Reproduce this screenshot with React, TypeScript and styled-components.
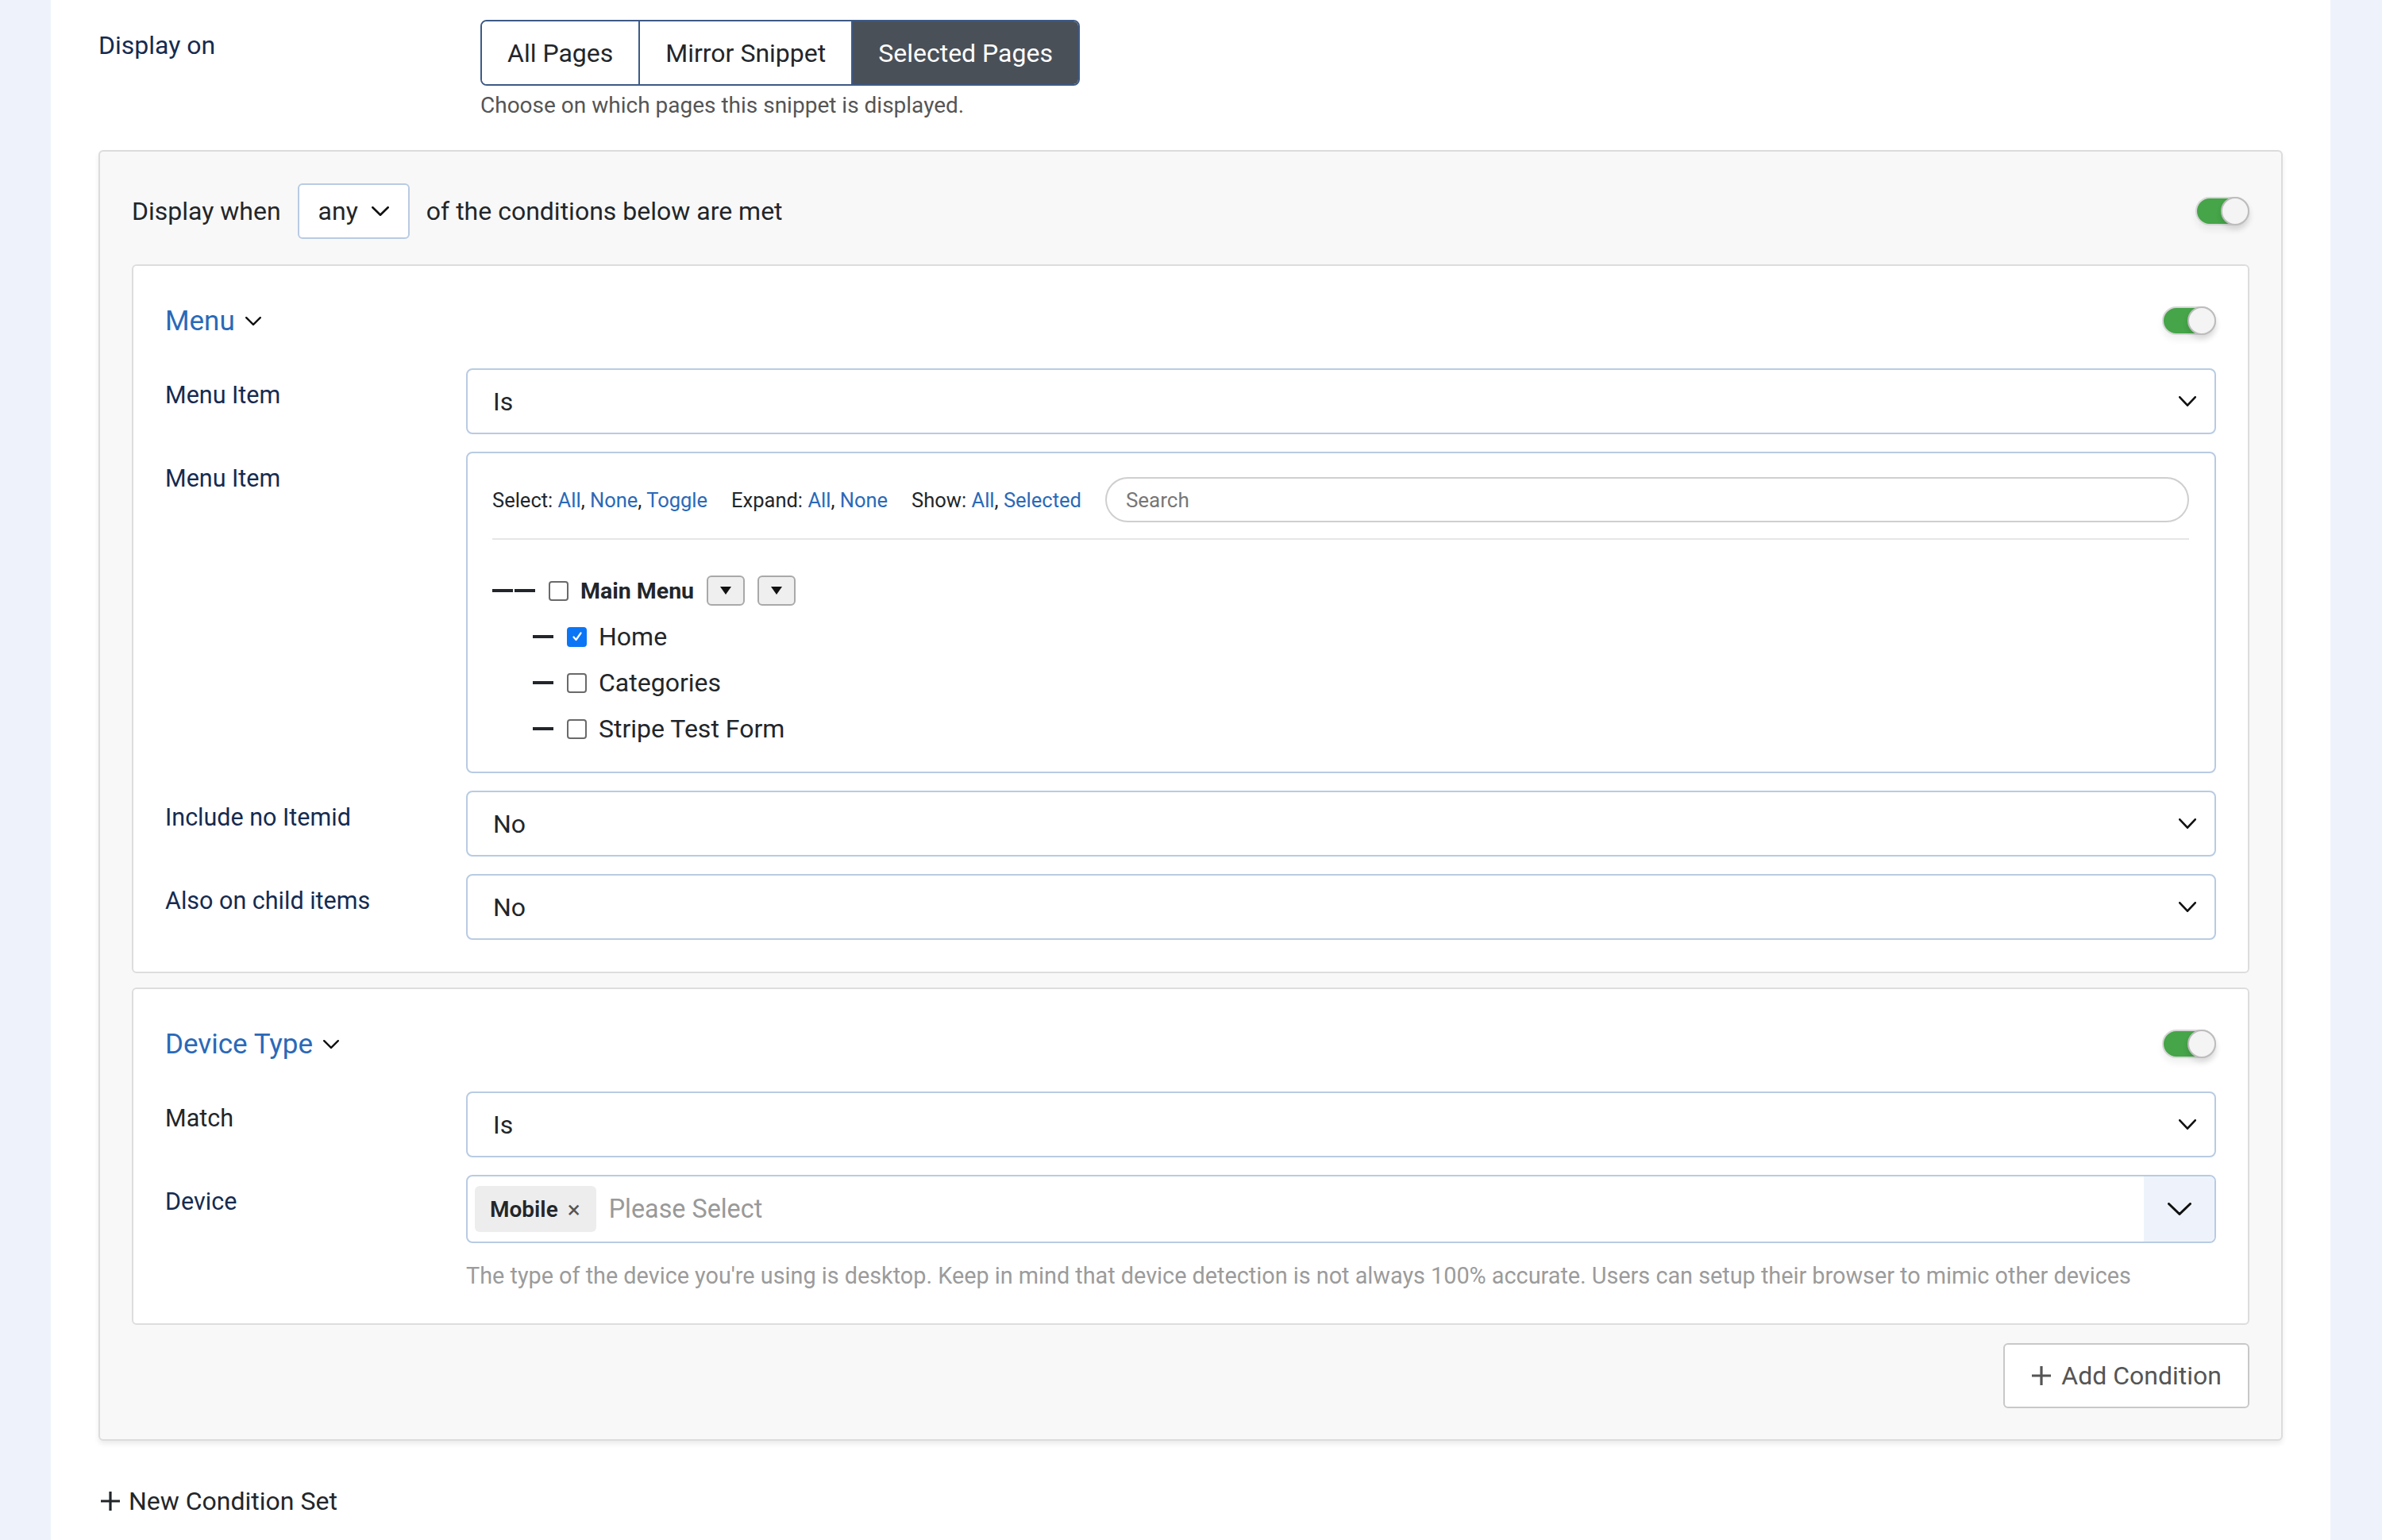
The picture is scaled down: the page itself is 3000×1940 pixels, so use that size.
import styled, { createGlobalStyle } from 'styled-components';

const GlobalStyle = createGlobalStyle`
  html, body {
    margin: 0;
    padding: 0;
  }
  body {
    background: #eef3fb;
    font-family: Roboto, "Noto Sans", Arial, sans-serif;
    color: #22262a;
  }
  * {
    box-sizing: border-box;
  }
`;

const Page = styled.div`
  margin: 0 65px 0 64px;
  min-height: 1940px;
  background: #fff;
  padding: 25px 60px 0;
`;

const TopRow = styled.div`
  display: grid;
  grid-template-columns: 481px 1fr;
`;

const TopLabel = styled.div`
  font-size: 32px;
  line-height: 46px;
  padding-top: 9px;
  color: #152b50;
`;

const Segments = styled.div`
  display: inline-flex;
  height: 83px;
  border: 2px solid #3d5a86;
  border-radius: 8px;
  overflow: hidden;
`;

const Segment = styled.button<{ $active?: boolean }>`
  font-family: inherit;
  font-size: 32px;
  padding: 0 32px;
  border: none;
  border-right: 2px solid #3d5a86;
  background: ${(p) => (p.$active ? '#4a5058' : '#fff')};
  color: ${(p) => (p.$active ? '#fff' : '#22262a')};
  &:last-child {
    border-right: none;
  }
`;

const TopHelp = styled.div`
  margin-top: 5px;
  font-size: 28px;
  line-height: 40px;
  color: #555;
`;

const SetPanel = styled.div`
  margin-top: 36px;
  background: #f8f8f8;
  border: 2px solid #dcdcdc;
  border-radius: 6px;
  box-shadow: 0 4px 6px rgba(0, 0, 0, 0.08);
  padding: 40px 40px 39px;
`;

const WhenRow = styled.div`
  display: flex;
  align-items: center;
  gap: 21px;
  font-size: 32px;
`;

const MiniSelect = styled.div`
  display: flex;
  align-items: center;
  gap: 17px;
  height: 70px;
  padding: 0 24px 0 24px;
  background: #fff;
  border: 2px solid #b9cbe3;
  border-radius: 6px;
  font-size: 32px;
`;

const Switch = styled.div`
  margin-left: auto;
  position: relative;
  width: 68px;
  height: 36px;
  border-radius: 18px;
  background: #45a548;
  border: 2px solid #d6d6d6;
  box-shadow: 0 6px 8px rgba(0, 0, 0, 0.06);
`;

const Knob = styled.span`
  position: absolute;
  right: -2px;
  top: -2px;
  width: 36px;
  height: 36px;
  border-radius: 50%;
  background: #f4f4f4;
  border: 2px solid #bdbdbd;
  box-shadow: 0 5px 7px rgba(0, 0, 0, 0.1);
`;

const Card = styled.div<{ $first?: boolean }>`
  margin-top: ${(p) => (p.$first ? '32px' : '18px')};
  background: #fff;
  border: 2px solid #dddddd;
  border-radius: 6px;
  padding: 44px 40px 40px;
`;

const CardHead = styled.div`
  display: flex;
  align-items: center;
  height: 50px;
  margin-bottom: 35px;
`;

const CardTitle = styled.div`
  display: flex;
  align-items: center;
  gap: 13px;
  font-size: 35px;
  color: #2a69b8;
`;

const Fields = styled.div`
  display: grid;
  grid-template-columns: 379px 1fr;
  row-gap: 22px;
`;

const Label = styled.div<{ $dark?: boolean }>`
  font-size: 30.5px;
  line-height: 45px;
  padding-top: 11px;
  color: ${(p) => (p.$dark ? '#22262a' : '#152b50')};
`;

const SelectBox = styled.div`
  display: flex;
  align-items: center;
  justify-content: space-between;
  height: 83px;
  padding: 0 23px 0 32px;
  border: 2px solid #b9cbe3;
  border-radius: 8px;
  font-size: 32px;
  color: #22262a;
`;

const TreeBox = styled.div`
  border: 2px solid #b9cbe3;
  border-radius: 8px;
  padding: 30px 32px 25px 31px;
`;

const Toolbar = styled.div`
  display: flex;
  align-items: center;
  gap: 30px;
  font-size: 25.5px;
  padding-bottom: 20px;
  border-bottom: 2px solid #e6e6e6;
`;

const ToolGroup = styled.span`
  white-space: nowrap;
`;

const ToolLink = styled.a`
  color: #2a69b8;
  text-decoration: none;
`;

const Search = styled.input`
  flex: 1;
  height: 57px;
  border: 2px solid #cfcfcf;
  border-radius: 29px;
  padding: 0 24px;
  font-family: inherit;
  font-size: 26px;
  outline: none;
  &::placeholder {
    color: #777;
  }
`;

const TreeList = styled.div`
  margin-top: 35px;
`;

const TreeRow = styled.div<{ $child?: boolean }>`
  display: flex;
  align-items: center;
  height: 58px;
  padding-left: ${(p) => (p.$child ? '51px' : '0')};
  font-size: ${(p) => (p.$child ? '32px' : '28.5px')};
  font-weight: ${(p) => (p.$child ? 400 : 700)};
`;

const Dash = styled.span`
  display: inline-block;
  width: 26px;
  height: 4px;
  background: #22262a;
  & + & {
    margin-left: 2px;
  }
`;

const Check = styled.span<{ $on?: boolean }>`
  display: inline-flex;
  align-items: center;
  justify-content: center;
  width: 25px;
  height: 25px;
  border-radius: 4px;
  border: 2px solid ${(p) => (p.$on ? '#0b76f5' : '#6a6a6a')};
  background: ${(p) => (p.$on ? '#0b76f5' : '#fff')};
  margin: 0 15px 0 17px;
`;

const CaretBtn = styled.span`
  display: inline-flex;
  align-items: center;
  justify-content: center;
  width: 48px;
  height: 38px;
  margin-left: 16px;
  border: 2px solid #a9a9a9;
  border-radius: 6px;
  background: #efefef;
`;

const MultiBox = styled.div`
  display: flex;
  align-items: center;
  height: 86px;
  padding-left: 9px;
  border: 2px solid #b9cbe3;
  border-radius: 8px;
  overflow: hidden;
`;

const Chip = styled.span`
  display: inline-flex;
  align-items: center;
  gap: 12px;
  height: 58px;
  padding: 0 20px 0 19px;
  border-radius: 6px;
  background: #ededed;
  font-size: 28px;
  font-weight: 600;
  color: #22262a;
`;

const ChipX = styled.span`
  font-weight: 400;
  color: #555;
  font-size: 30px;
`;

const Placeholder = styled.span`
  flex: 1;
  margin-left: 16px;
  font-size: 32.3px;
  color: #999;
`;

const DropArea = styled.span`
  display: flex;
  align-items: center;
  justify-content: center;
  align-self: stretch;
  width: 89px;
  background: #eef3fb;
`;

const Help = styled.div`
  grid-column: 2;
  margin-top: -1px;
  font-size: 28.8px;
  line-height: 40px;
  color: #9b9b9b;
`;

const Footer = styled.div`
  display: flex;
  justify-content: flex-end;
  margin-top: 23px;
`;

const AddButton = styled.button`
  display: flex;
  align-items: center;
  gap: 12px;
  height: 82px;
  padding: 0 33px;
  background: #fff;
  border: 2px solid #c8c8c8;
  border-radius: 6px;
  font-family: inherit;
  font-size: 32px;
  color: #555;
`;

const NewSet = styled.div`
  display: flex;
  align-items: center;
  gap: 10px;
  margin-top: 53px;
  padding-left: 2px;
  font-size: 32px;
  line-height: 46px;
  color: #22262a;
`;

const Chevron = ({ w, h, sw = 2.6, color = '#111' }: { w: number; h: number; sw?: number; color?: string }) => (
  <svg width={w} height={h} viewBox={`0 0 ${w} ${h}`} fill="none">
    <polyline
      points={`${sw / 2},${sw / 2} ${w / 2},${h - sw / 2} ${w - sw / 2},${sw / 2}`}
      stroke={color}
      strokeWidth={sw}
      strokeLinecap="round"
      strokeLinejoin="round"
    />
  </svg>
);

const Plus = ({ color }: { color: string }) => (
  <svg width="26" height="26" viewBox="0 0 26 26">
    <path d="M13 1v24M1 13h24" stroke={color} strokeWidth="3.2" />
  </svg>
);

const Caret = () => (
  <svg width="14" height="10" viewBox="0 0 14 10">
    <polygon points="0,0 14,0 7,10" fill="#111" />
  </svg>
);

const Tick = () => (
  <svg width="16" height="16" viewBox="0 0 16 16" fill="none">
    <polyline points="3.5,8.5 6.5,12 12.5,3.5" stroke="#fff" strokeWidth="2.2" strokeLinecap="round" strokeLinejoin="round" />
  </svg>
);

const Toggle = () => (
  <Switch>
    <Knob />
  </Switch>
);

const Select = ({ value }: { value: string }) => (
  <SelectBox>
    <span>{value}</span>
    <Chevron w={22} h={13} />
  </SelectBox>
);

const menuItems = [
  { label: 'Home', checked: true },
  { label: 'Categories', checked: false },
  { label: 'Stripe Test Form', checked: false },
];

export default function App() {
  return (
    <>
      <GlobalStyle />
      <Page>
        <TopRow>
          <TopLabel>Display on</TopLabel>
          <div>
            <Segments>
              <Segment>All Pages</Segment>
              <Segment>Mirror Snippet</Segment>
              <Segment $active>Selected Pages</Segment>
            </Segments>
            <TopHelp>Choose on which pages this snippet is displayed.</TopHelp>
          </div>
        </TopRow>

        <SetPanel>
          <WhenRow>
            <span>Display when</span>
            <MiniSelect>
              <span>any</span>
              <Chevron w={22} h={12} sw={2.6} />
            </MiniSelect>
            <span>of the conditions below are met</span>
            <Toggle />
          </WhenRow>

          <Card $first>
            <CardHead>
              <CardTitle>
                Menu
                <Chevron w={20} h={11} sw={2.4} />
              </CardTitle>
              <Toggle />
            </CardHead>
            <Fields>
              <Label>Menu Item</Label>
              <Select value="Is" />

              <Label>Menu Item</Label>
              <TreeBox>
                <Toolbar>
                  <ToolGroup>
                    Select: <ToolLink>All</ToolLink>, <ToolLink>None</ToolLink>, <ToolLink>Toggle</ToolLink>
                  </ToolGroup>
                  <ToolGroup>
                    Expand: <ToolLink>All</ToolLink>, <ToolLink>None</ToolLink>
                  </ToolGroup>
                  <ToolGroup>
                    Show: <ToolLink>All</ToolLink>, <ToolLink>Selected</ToolLink>
                  </ToolGroup>
                  <Search placeholder="Search" />
                </Toolbar>
                <TreeList>
                  <TreeRow>
                    <Dash />
                    <Dash />
                    <Check />
                    Main Menu
                    <CaretBtn>
                      <Caret />
                    </CaretBtn>
                    <CaretBtn>
                      <Caret />
                    </CaretBtn>
                  </TreeRow>
                  {menuItems.map((item) => (
                    <TreeRow $child key={item.label}>
                      <Dash />
                      <Check $on={item.checked}>{item.checked && <Tick />}</Check>
                      {item.label}
                    </TreeRow>
                  ))}
                </TreeList>
              </TreeBox>

              <Label>Include no Itemid</Label>
              <Select value="No" />

              <Label>Also on child items</Label>
              <Select value="No" />
            </Fields>
          </Card>

          <Card>
            <CardHead>
              <CardTitle>
                Device Type
                <Chevron w={20} h={11} sw={2.4} />
              </CardTitle>
              <Toggle />
            </CardHead>
            <Fields>
              <Label $dark>Match</Label>
              <Select value="Is" />

              <Label>Device</Label>
              <MultiBox>
                <Chip>
                  Mobile
                  <ChipX>×</ChipX>
                </Chip>
                <Placeholder>Please Select</Placeholder>
                <DropArea>
                  <Chevron w={30} h={16} sw={3} />
                </DropArea>
              </MultiBox>
              <Help>
                The type of the device you're using is desktop. Keep in mind that device detection is not always 100%
                accurate. Users can setup their browser to mimic other devices
              </Help>
            </Fields>
          </Card>

          <Footer>
            <AddButton>
              <Plus color="#555" />
              Add Condition
            </AddButton>
          </Footer>
        </SetPanel>

        <NewSet>
          <Plus color="#22262a" />
          New Condition Set
        </NewSet>
      </Page>
    </>
  );
}
